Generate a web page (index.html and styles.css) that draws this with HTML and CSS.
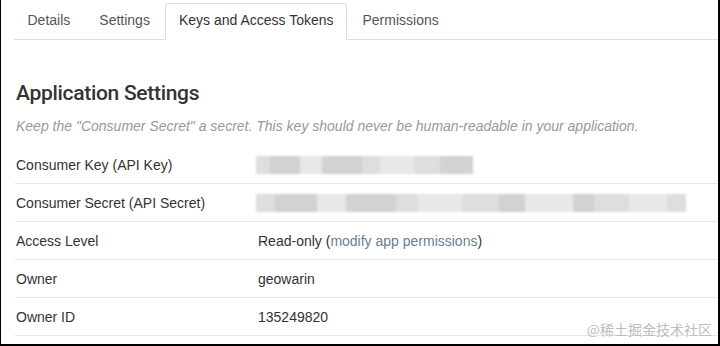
FILE: index.html
```html
<!DOCTYPE html>
<html>
<head>
    <title>Keys and Access Tokens</title>
    <link rel="stylesheet" href="styles.css">
</head>
<body>
    <div class="frame">
        <ul class="tabs">
            <li class="tab">Details</li>
            <li class="tab">Settings</li>
            <li class="tab active">Keys and Access Tokens</li>
            <li class="tab">Permissions</li>
        </ul>

        <h2 class="heading">Application Settings</h2>
        <p class="hint">Keep the "Consumer Secret" a secret. This key should never be human-readable in your application.</p>

        <div class="rows">
            <div class="row">
                <div class="label">Consumer Key (API Key)</div>
                <div class="value">
                    <div class="blur key">
                        <span style="width:14px"></span><span style="width:30px"></span><span style="width:22px"></span><span style="width:40px"></span><span style="width:18px"></span><span style="width:34px"></span><span style="width:26px"></span><span style="width:33px"></span>
                    </div>
                </div>
            </div>
            <div class="row">
                <div class="label">Consumer Secret (API Secret)</div>
                <div class="value">
                    <div class="blur secret">
                        <span style="width:20px"></span><span style="width:44px"></span><span style="width:30px"></span><span style="width:52px"></span><span style="width:24px"></span><span style="width:46px"></span><span style="width:38px"></span><span style="width:28px"></span><span style="width:50px"></span><span style="width:22px"></span><span style="width:36px"></span><span style="width:40px"></span><span style="width:20px"></span>
                    </div>
                </div>
            </div>
            <div class="row">
                <div class="label">Access Level</div>
                <div class="value">Read-only (<a class="link">modify app permissions</a>)</div>
            </div>
            <div class="row">
                <div class="label">Owner</div>
                <div class="value">geowarin</div>
            </div>
            <div class="row">
                <div class="label">Owner ID</div>
                <div class="value">135249820</div>
            </div>
        </div>

        <div class="watermark">@稀土掘金技术社区</div>
    </div>
</body>
</html>
```

FILE: styles.css
```css
html, body {
    margin: 0;
    padding: 0;
    background: #000;
}

.frame {
    position: relative;
    width: 717px;
    height: 344px;
    margin-left: 1px;
    background: #fff;
    font-family: "Liberation Sans", Arial, sans-serif;
    font-size: 14px;
    color: #333;
    overflow: hidden;
}

.tabs {
    display: flex;
    list-style: none;
    margin: 0 0 0 13px;
    padding: 3px 0 0 0;
    border-bottom: 1px solid #ddd;
}

.tab {
    padding: 8px 12.5px 10px 12.5px;
    color: #555;
    border: 1px solid transparent;
    border-radius: 4px 4px 0 0;
    margin-right: 2px;
    margin-bottom: -1px;
    line-height: 17px;
}

.tab.active {
    color: #333;
    background: #fff;
    border-color: #ddd #ddd #fff #ddd;
}

.heading {
    font-family: Roboto, "Liberation Sans", sans-serif;
    font-weight: 500;
    font-size: 21px;
    letter-spacing: -0.3px;
    color: #333;
    margin: 41px 0 0 15px;
    line-height: 24px;
}

.hint {
    font-style: italic;
    font-size: 14px;
    color: #999;
    margin: 12px 0 0 15px;
    line-height: 18px;
}

.rows {
    margin: 11px 0 0 14px;
}

.row {
    display: flex;
    align-items: center;
    height: 37px;
    border-bottom: 1px solid #e6e6e6;
}

.label {
    width: 242px;
    padding-left: 1px;
}

.value {
    flex: 1;
}

.link {
    color: #6b8090;
}

.blur {
    display: flex;
    height: 18px;
    margin-left: -2px;
    filter: blur(1px);
}

.blur span {
    height: 100%;
    background: #dedede;
}

.blur span:nth-child(2n) {
    background: #d2d2d2;
}

.blur span:nth-child(3n) {
    background: #e8e8e8;
}

.key {
    width: 217px;
}

.secret {
    width: 430px;
}

.watermark {
    position: absolute;
    right: 6px;
    bottom: 5px;
    font-family: "Noto Sans CJK SC", sans-serif;
    font-size: 14px;
    color: #bdbdbd;
}
```
